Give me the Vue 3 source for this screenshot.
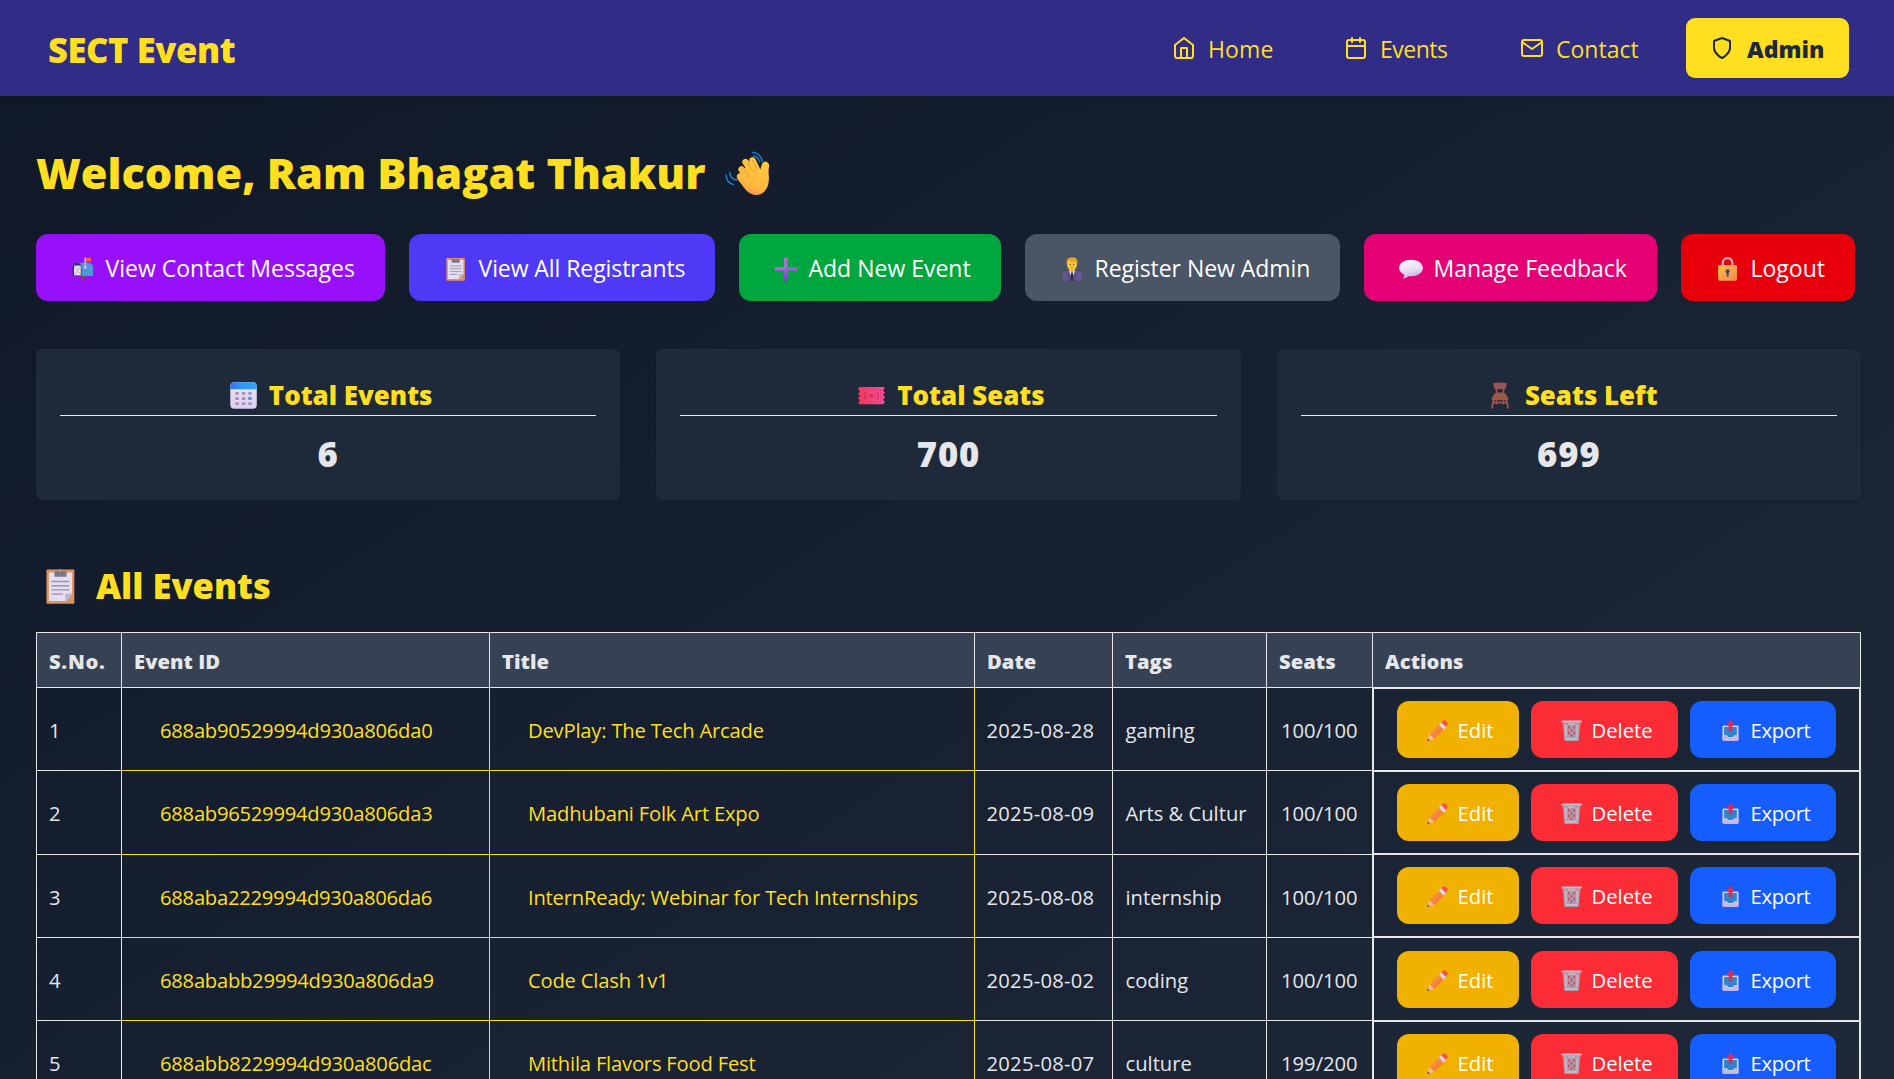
<script setup>
const nav = [
  { id: 'home', label: 'Home' },
  { id: 'events', label: 'Events' },
  { id: 'contact', label: 'Contact' },
]

const actions = [
  { id: 'messages', icon: 'mailbox', label: 'View Contact Messages' },
  { id: 'registrants', icon: 'clipboard', label: 'View All Registrants' },
  { id: 'add', icon: 'plus', label: 'Add New Event' },
  { id: 'admin', icon: 'office', label: 'Register New Admin' },
  { id: 'feedback', icon: 'speech', label: 'Manage Feedback' },
  { id: 'logout', icon: 'lock', label: 'Logout' },
]

const stats = [
  { icon: 'calendar', label: 'Total Events', value: 6 },
  { icon: 'ticket', label: 'Total Seats', value: 700 },
  { icon: 'chair', label: 'Seats Left', value: 699 },
]

const events = [
  { id: '688ab90529994d930a806da0', title: 'DevPlay: The Tech Arcade', date: '2025-08-28', tags: 'gaming', seats: '100/100' },
  { id: '688ab96529994d930a806da3', title: 'Madhubani Folk Art Expo', date: '2025-08-09', tags: 'Arts & Cultur', seats: '100/100' },
  { id: '688aba2229994d930a806da6', title: 'InternReady: Webinar for Tech Internships', date: '2025-08-08', tags: 'internship', seats: '100/100' },
  { id: '688ababb29994d930a806da9', title: 'Code Clash 1v1', date: '2025-08-02', tags: 'coding', seats: '100/100' },
  { id: '688abb8229994d930a806dac', title: 'Mithila Flavors Food Fest', date: '2025-08-07', tags: 'culture', seats: '199/200' },
]
</script>

<template>
  <svg class="sprite" aria-hidden="true">
    <defs>
      <linearGradient id="g-hand" x1="0.7" y1="0" x2="0.3" y2="1">
        <stop offset="0" stop-color="#ffc83d" /><stop offset="0.7" stop-color="#ffb83f" /><stop offset="1" stop-color="#f98a5b" />
      </linearGradient>
      <linearGradient id="g-plus" x1="0" y1="0" x2="0" y2="1">
        <stop offset="0" stop-color="#9a72b8" /><stop offset="0.5" stop-color="#8d68c8" /><stop offset="1" stop-color="#7a3fcc" />
      </linearGradient>
      <linearGradient id="g-bubble" x1="0.3" y1="0" x2="0.6" y2="1">
        <stop offset="0" stop-color="#fbf8ff" /><stop offset="0.6" stop-color="#e6dcf2" /><stop offset="1" stop-color="#bba4dc" />
      </linearGradient>
      <linearGradient id="g-lock" x1="0" y1="0" x2="1" y2="1">
        <stop offset="0" stop-color="#ffc04a" /><stop offset="1" stop-color="#ee8a4c" />
      </linearGradient>
      <linearGradient id="g-cal" x1="0" y1="0" x2="1" y2="0">
        <stop offset="0" stop-color="#3b6fe8" /><stop offset="0.4" stop-color="#2d95f5" /><stop offset="1" stop-color="#35a4ff" />
      </linearGradient>
      <linearGradient id="g-page" x1="0" y1="0" x2="0" y2="1">
        <stop offset="0" stop-color="#ece6f4" /><stop offset="1" stop-color="#dccdf0" />
      </linearGradient>
      <linearGradient id="g-ticket" x1="0" y1="0" x2="1" y2="0">
        <stop offset="0" stop-color="#f8365c" /><stop offset="1" stop-color="#fb4f9c" />
      </linearGradient>
      <linearGradient id="g-pencil" x1="0" y1="0" x2="1" y2="1">
        <stop offset="0" stop-color="#ffa14d" /><stop offset="1" stop-color="#ef6a35" />
      </linearGradient>
      <linearGradient id="g-suit" x1="0" y1="0" x2="1" y2="0">
        <stop offset="0" stop-color="#6a5a94" /><stop offset="0.5" stop-color="#594a80" /><stop offset="1" stop-color="#6c5b9c" />
      </linearGradient>
    </defs>

    <symbol id="wave" viewBox="0 0 45 45">
      <g fill="none" stroke="#1b7fc4" stroke-width="1.5" stroke-linecap="round">
        <path d="M27.5 2.2c5 .3 9 4.2 10 9.200M28.500 6c3 .5 5.300 2.800 6.200 6" />
        <path d="M1.200 25c-.3 4.600 2.800 8.700 7.300 9.600M4.800 22.500c.2 4 3 7 7 7.600" />
      </g>
      <g stroke="url(#g-hand)" stroke-width="6.400" stroke-linecap="round" fill="none">
        <path d="M15 26.500 24 38M16.500 19.500 27 32M20.500 12 31 28M27.500 10.500 36 28" />
      </g>
      <path d="M14.500 23 26 12.500 34.500 22l2-6.500c.6-2.800 3.200-4.600 5.300-3.600 2.200 1 2.700 3 2.200 5.100-.8 3.500-.3 6.500-.1 10.500.2 8-3 14.500-8.500 16.800-5.600 2-11.400-.3-15.400-5.300L12.500 29z" fill="url(#g-hand)" />
      <path d="M17.800 18.500 24.500 26.500M22.500 13 29 22M27.500 10.500 32.800 19.500" stroke="#e8923a" stroke-width="0.900" stroke-linecap="round" fill="none" />
    </symbol>

    <symbol id="mailbox" viewBox="0 0 24 24">
      <rect x="9.800" y="18" width="3.800" height="5.200" fill="#7d4a3c" />
      <path d="M6 5.800h11.500a4.600 4.600 0 0 1 4.600 4.600V19H6z" fill="#4e97dc" />
      <path d="M1.500 19v-8.800A4.400 4.400 0 0 1 6 5.800a4.400 4.400 0 0 1 4.500 4.400V19z" fill="#2b3a62" />
      <path d="M3 8.600h6.800V18.400H3z" fill="#e7e0ef" />
      <path d="m3.500 9 3 4.500 3-4M3.500 18l3-4.500 3 4" stroke="#a79fba" stroke-width="0.700" fill="none" />
      <path d="M13.300.6h1.900v9.600h-1.900z" fill="#b5a9c2" />
      <circle cx="14.200" cy="10.300" r="1.700" fill="#c6b8cf" />
      <path d="M15.200.8H20v3.700h-4.800z" fill="#f9603c" />
    </symbol>

    <symbol id="clipboard" viewBox="0 0 24 24">
      <rect x="2.300" y="1" width="18.600" height="22.800" rx="0.700" fill="#dd935f" />
      <path d="M3.900 3h15.500v13.800l-4.500 5.200h-11z" fill="#e5def0" />
      <path d="M19.400 16.800v1.300l-3.700 3.900h-.8v-4.600z" fill="#bfb2cf" />
      <path d="M5.700 9h11.800M5.700 11.800h11.800M5.700 14.600h11.800M5.700 17.400h7.500" stroke="#9a8fa8" stroke-width="0.900" />
      <path d="M7.600 2.200h2.500a1.600 1.600 0 0 1 3 0h2.600v3.600H7.600z" fill="#7f7683" />
      <circle cx="11.600" cy="1.600" r="0.800" fill="#b7aebb" />
    </symbol>

    <symbol id="plus" viewBox="0 0 24 24">
      <path d="M9.900 1.300q0-1 1-1h2.200q1 0 1 1v8.600h8.600q1 0 1 1v2.200q0 1-1 1h-8.600v8.600q0 1-1 1h-2.200q-1 0-1-1v-8.600H1.300q-1 0-1-1v-2.200q0-1 1-1h8.600z" fill="url(#g-plus)" />
      <path d="M11.200 1.500v9.800H1.500" stroke="#ad8fd4" stroke-width="0.800" fill="none" />
    </symbol>

    <symbol id="office" viewBox="0 0 24 24">
      <path d="M2.500 23.800v-5.300q0-3.200 3.700-4.100L12 13l5.800 1.400q3.700.9 3.700 4.100v5.300z" fill="url(#g-suit)" />
      <path d="M9.200 12h5.600v3L12 21l-2.800-6z" fill="#e4dcef" />
      <path d="m11.200 15.200h1.600l.9 8.600h-3.400z" fill="#33304a" />
      <path d="M9.700 10.500h4.600v3.300L12 15.500l-2.300-1.700z" fill="#f2a634" />
      <ellipse cx="12" cy="7.600" rx="4.900" ry="5.700" fill="#ffc83d" />
      <path d="M6.700 7.500C5.800 3 8 .2 12.200.3c4.300 0 6 3 5.100 7.100l-.9-2.600c-2.600.7-5.600.3-8-.8z" fill="#e8a52a" />
      <circle cx="10.200" cy="7.700" r="0.600" fill="#4a2b2b" /><circle cx="13.800" cy="7.700" r="0.600" fill="#4a2b2b" />
      <path d="M10.400 10.500q1.600 1 3.200 0" stroke="#c05a3a" stroke-width="0.700" fill="none" />
    </symbol>

    <symbol id="speech" viewBox="0 0 24 24">
      <path d="M12 2.700c6.700 0 11.900 3.400 11.900 8.300S18.700 19.300 12 19.300l-2.400-.1q-2 1.900-5 2.200-.8 0-.4-.8.900-1.400.9-3.200C2 15.900.1 13.700.1 11c0-4.900 5.200-8.300 11.900-8.300z" fill="url(#g-bubble)" />
    </symbol>

    <symbol id="lock" viewBox="0 0 24 24">
      <path d="M6.800 9V6a4.800 4.800 0 0 1 9.600 0v3" fill="none" stroke="#b9adb8" stroke-width="2.300" />
      <rect x="2.100" y="7.900" width="19" height="15.800" rx="1.600" fill="url(#g-lock)" />
      <circle cx="11.600" cy="14.200" r="2" fill="#4c4260" />
      <path d="M10.600 14.500h2v5h-2z" fill="#4c4260" />
    </symbol>

    <symbol id="calendar" viewBox="0 0 27 27">
      <rect x="0.300" y="0.300" width="26.500" height="26.500" rx="4" fill="url(#g-page)" />
      <path d="M.3 7.300v-3a4 4 0 0 1 4-4h18.500a4 4 0 0 1 4 4v3z" fill="url(#g-cal)" />
      <path d="M5.400 9.900h3.300v2.900H5.400zM12 9.900h3.300v2.900H12zM18.300 9.900h3.300v2.900h-3.300zM5.400 15h3.300v2.900H5.400zM12 15h3.300v2.900H12zM5.400 20.200h3.300v2.900H5.400zM12 20.200h3.300v2.900H12zM18.300 20.200h3.300v2.900h-3.300z" fill="#a294b5" />
      <path d="M18.300 15h3.300v2.900h-3.300z" fill="#2f96f5" />
    </symbol>

    <symbol id="ticket" viewBox="0 0 27 27">
      <path d="M2 5h23q1.700 0 1.700 1.800-1.600.6-1.600 1.700t1.600 1.600v1.200q-1.600.6-1.600 1.700t1.600 1.600v1.300q-1.600.6-1.600 1.700t1.600 1.700Q26.700 22.200 25 22.200H2Q.3 22.200.3 20.300q1.600-.6 1.600-1.700T.3 16.900v-1.300q1.600-.5 1.600-1.600T.3 12.300v-1.200q1.600-.5 1.600-1.600T.3 7.800V6.800Q.3 5 2 5z" fill="url(#g-ticket)" />
      <rect x="4.300" y="7" width="18.400" height="13.200" rx="0.800" fill="none" stroke="#d43a68" stroke-width="0.600" />
      <rect x="6.500" y="9.700" width="1.300" height="7.800" fill="#c4335f" /><rect x="19.200" y="9.700" width="1.300" height="7.800" fill="#c4335f" />
      <path d="M10.200 8.200v11M16.800 8.200v11" stroke="#d43a68" stroke-width="0.500" />
      <circle cx="13.500" cy="13.600" r="1.700" fill="#b8345a" />
    </symbol>

    <symbol id="chair" viewBox="0 0 27 27">
      <g fill="none" stroke="#9a5254" stroke-width="1.900">
        <path d="M10.600 6.500v6M17.400 6.500v6M10 11.500h8" />
        <path d="M7.400 18 5.900 26.500M20.600 18l1.500 8.500M7 20.500h14" />
        <path d="M10.500 18v4.500M17.500 18v4.500" stroke-width="1.200" />
      </g>
      <path d="M8 .9q6-1 12 0 .8.200.7 1.200l-.6 3.900q-.2.900-1 .9H8.900q-.8 0-1-.9l-.6-3.900Q7.200 1.100 8 .9z" fill="#97545a" />
      <path d="M8.400 11.600h11.200l2.700 4.700q.4 2-1.200 2H6.900q-1.600 0-1.200-2z" fill="#9c5843" />
    </symbol>

    <symbol id="pencil" viewBox="0 0 24 24">
      <path d="M16.200 2.700 19 .5q1-.7 2 .2l2.500 2.600q.8.900 0 1.900l-2.500 3z" fill="#f8504f" />
      <path d="m13.400 5.500 2.800-2.800 5.500 5.500-2.800 2.800z" fill="#ddd3ea" />
      <path d="m2.700 16.200 10.700-10.700 5.500 5.500L8.200 21.600z" fill="url(#g-pencil)" />
      <path d="m2.700 16.200 5.500 5.400-7.800 2.300z" fill="#f3bd9b" />
      <path d="m1.200 21.200 1.900 1.900-2.700.8z" fill="#4b3550" />
    </symbol>

    <symbol id="trash" viewBox="0 0 24 24">
      <path d="M1.800 2.500h20.400L20.200 23q-.1.800-1 .8H4.800q-.9 0-1-.8z" fill="#a99cae" />
      <path d="M5.600 5.500v14M18.400 5.500v14M8 4.500h8" stroke="#d3c8d8" stroke-width="1.300" />
      <path d="m9 6.200 1.200 2.100L9 10.600 7.800 8.300zM15 6.200l1.200 2.100-1.200 2.300-1.200-2.300zM12 9.300l1.200 2.300-1.200 2.300-1.200-2.300zM9 12.500l1.200 2.300L9 17.100l-1.200-2.300zM15 12.500l1.200 2.300-1.200 2.300-1.200-2.300zM12 15.700l1.200 2-1.200 2-1.200-2z" fill="#ec3a4a" />
      <path d="M1 .7h22q.7 0 .7.900t-.7 1.200H1Q.3 2.500.3 1.600T1 .7z" fill="#c9bfcc" />
      <path d="M5 21.500h14" stroke="#d4cbdb" stroke-width="1.400" />
    </symbol>

    <symbol id="outbox" viewBox="0 0 24 24">
      <rect x="2.800" y="6.300" width="18.300" height="17.300" rx="1.300" fill="#d7cfe3" />
      <path d="M4.700 8h14.500v9.300h-3l-1.500 2H9.300l-1.500-2H4.700z" fill="#2e84cf" />
      <path d="M2.800 18.200h4.400l1.600 2.100h6.400l1.600-2.100h4.300v4.100q0 1.300-1.300 1.300H4.100q-1.300 0-1.300-1.300z" fill="#c9b6e2" />
      <path d="M11.300.7q.6-.8 1.300 0l3.800 4.900q.5.900-.5.900h-1.900v5.200q0 .8-.8.800h-2.500q-.8 0-.8-.8V6.500H8q-1 0-.5-.9z" fill="#dc2c58" />
    </symbol>
  </svg>

  <div class="page">
    <header class="topbar">
      <div class="brand">SECT Event</div>
      <nav class="nav">
        <a v-for="n in nav" :key="n.id" class="nav-link" :class="`nav-${n.id}`">
          <svg class="line-icon" viewBox="0 0 24 24">
            <template v-if="n.id === 'home'">
              <path d="m3 9 9-7 9 7v11a2 2 0 0 1-2 2H5a2 2 0 0 1-2-2z" />
              <path d="M9 22V12h6v10" />
            </template>
            <template v-else-if="n.id === 'events'">
              <rect x="3" y="4" width="18" height="18" rx="2" />
              <path d="M16 2v4M8 2v4M3 10h18" />
            </template>
            <template v-else>
              <rect x="2" y="4" width="20" height="16" rx="2" />
              <path d="m22 6-10 7L2 6" />
            </template>
          </svg>
          <span>{{ n.label }}</span>
        </a>
        <a class="admin-btn">
          <svg class="line-icon" viewBox="0 0 24 24"><path d="M12 22s8-4 8-10V5l-8-3-8 3v7c0 6 8 10 8 10z" /></svg>
          <span>Admin</span>
        </a>
      </nav>
    </header>

    <main class="content">
      <h1 class="welcome">
        <span>Welcome, Ram Bhagat Thakur</span>
        <svg class="emoji"><use href="#wave" /></svg>
      </h1>

      <div class="actions">
        <button v-for="a in actions" :key="a.id" class="action" :class="`action-${a.id}`">
          <svg class="emoji"><use :href="`#${a.icon}`" /></svg>
          <span>{{ a.label }}</span>
        </button>
      </div>

      <section class="stats">
        <div v-for="s in stats" :key="s.label" class="stat">
          <h2 class="stat-title">
            <svg class="emoji"><use :href="`#${s.icon}`" /></svg>
            <span>{{ s.label }}</span>
          </h2>
          <p class="stat-value">{{ s.value }}</p>
        </div>
      </section>

      <h2 class="section-title">
        <svg class="emoji"><use href="#clipboard" /></svg>
        <span>All Events</span>
      </h2>

      <div class="table">
        <div class="row head">
          <div class="cell">S.No.</div>
          <div class="cell">Event ID</div>
          <div class="cell">Title</div>
          <div class="cell">Date</div>
          <div class="cell">Tags</div>
          <div class="cell">Seats</div>
          <div class="cell">Actions</div>
        </div>
        <div v-for="(e, i) in events" :key="e.id" class="row">
          <div class="cell">{{ i + 1 }}</div>
          <div class="cell gold event-id">{{ e.id }}</div>
          <div class="cell gold title">{{ e.title }}</div>
          <div class="cell date">{{ e.date }}</div>
          <div class="cell tags">{{ e.tags }}</div>
          <div class="cell seats">{{ e.seats }}</div>
          <div class="tools">
            <button class="tool edit"><svg class="emoji"><use href="#pencil" /></svg><span>Edit</span></button>
            <button class="tool delete"><svg class="emoji"><use href="#trash" /></svg><span>Delete</span></button>
            <button class="tool export"><svg class="emoji"><use href="#outbox" /></svg><span>Export</span></button>
          </div>
        </div>
      </div>
    </main>
  </div>
</template>

<style>
body {
  margin: 0;
  overflow: hidden;
}
</style>

<style scoped>
.sprite {
  position: absolute;
  width: 0;
  height: 0;
}

.page {
  height: 1079px;
  overflow: hidden;
  background: linear-gradient(to bottom right, #101828, #1e2939) 0 0 / 100% 1210px no-repeat;
  color: #e5e7eb;
  font-family: "Open Sans", "Noto Sans", sans-serif;
}

button {
  border: 0;
  padding: 0;
  color: #fff;
  font-family: inherit;
}

.emoji {
  width: 1em;
  height: 1em;
  flex: none;
  overflow: visible;
}

.topbar {
  display: flex;
  align-items: center;
  justify-content: space-between;
  height: 96px;
  padding: 0 45px 0 48px;
  box-sizing: border-box;
  background: #312c85;
  box-shadow: 0 4px 6px -1px rgba(0, 0, 0, 0.1);
  color: #ffdf20;
}

.brand {
  padding-top: 3px;
  font-size: 34.6px;
  font-weight: 800;
  letter-spacing: -0.42px;
}

.nav,
.nav-link,
.admin-btn {
  display: flex;
  align-items: center;
}

.nav-link,
.admin-btn {
  font-size: 23px;
}

.nav-link span,
.admin-btn span {
  padding-top: 2px;
}

.nav-link {
  gap: 12px;
}

.nav-home {
  width: 172px;
  letter-spacing: 0.1px;
}

.nav-events {
  width: 176px;
  letter-spacing: -0.5px;
}

.nav-contact {
  width: 166px;
}

.line-icon {
  width: 24px;
  height: 24px;
  flex: none;
  fill: none;
  stroke: currentColor;
  stroke-width: 2;
  stroke-linecap: round;
  stroke-linejoin: round;
}

.admin-btn {
  gap: 13px;
  width: 163px;
  height: 60px;
  padding-left: 24px;
  box-sizing: border-box;
  border-radius: 9px;
  background: #ffdf20;
  color: #1e2939;
  font-weight: 800;
}

.content {
  width: 1825px;
  padding-left: 36px;
}

.welcome {
  display: flex;
  align-items: center;
  gap: 20px;
  height: 62px;
  margin: 50px 0 26px;
  color: #ffdf20;
  font-size: 43.2px;
  font-weight: 800;
  line-height: 62px;
}

.welcome .emoji {
  width: 45px;
  height: 45px;
  margin-bottom: 9px;
}

.welcome span {
  padding-bottom: 8px;
}

.actions {
  display: flex;
  gap: 24px;
}

.action {
  display: flex;
  align-items: center;
  gap: 11px;
  height: 67px;
  padding-left: 34.5px;
  border-radius: 12px;
  font-size: 23px;
}

.action .emoji,
.tool .emoji {
  width: 1.043em;
  height: 1.043em;
}

.action .emoji {
  margin-top: 2px;
}

.action-messages {
  width: 349px;
  background: #9810fa;
}

.action-registrants {
  width: 306px;
  background: #4f39f6;
  letter-spacing: -0.07px;
}

.action-add {
  width: 262px;
  background: #00a63e;
}

.action-admin {
  width: 315px;
  background: #4a5565;
  letter-spacing: -0.05px;
}

.action-feedback {
  width: 293px;
  background: #e60076;
}

.action-logout {
  width: 174px;
  background: #e7000b;
}

.stats {
  display: grid;
  grid-template-columns: repeat(3, 1fr);
  gap: 36px;
  margin-top: 48px;
}

.stat {
  height: 151px;
  padding: 24px;
  box-sizing: border-box;
  border-radius: 6px;
  background: #1e2939;
  box-shadow: 0 1px 3px rgba(0, 0, 0, 0.1);
}

.stat-title {
  display: flex;
  align-items: center;
  justify-content: center;
  gap: 12px;
  height: 43px;
  margin: 0;
  padding-left: 6px;
  box-sizing: border-box;
  border-bottom: 1px solid #e5e7eb;
  color: #ffdf20;
  font-size: 25.9px;
  font-weight: 800;
  line-height: 42px;
}

.stat-title .emoji {
  width: 27px;
  height: 27px;
  margin-top: 2px;
}

.stat-title span {
  padding-top: 1px;
}

.stat-value {
  margin: 11px 0 0;
  font-size: 34.6px;
  font-weight: 800;
  line-height: 53px;
  letter-spacing: 0.9px;
  text-align: center;
}

.section-title {
  display: flex;
  align-items: center;
  gap: 17px;
  height: 54px;
  margin: 61px 0 18px 7px;
  color: #ffdf20;
  font-size: 34.6px;
  font-weight: 800;
  line-height: 54px;
}

.section-title .emoji {
  width: 36px;
  height: 36px;
  margin-bottom: 4px;
}

.section-title span {
  padding-bottom: 4px;
}

.table {
  width: 1825px;
  margin-top: -1px;
  box-sizing: border-box;
  border: 1px solid #e5e7eb;
  border-bottom: 0;
}

.row {
  display: grid;
  grid-template-columns: 85px 368px 485px 138px 154px 106px 1fr;
  height: 83.3px;
}

.cell {
  display: flex;
  align-items: center;
  padding: 2px 0 0 12px;
  border-right: 1px solid #e5e7eb;
  border-bottom: 1px solid #e5e7eb;
  font-size: 20.2px;
  white-space: nowrap;
}

.head {
  height: 55px;
  background: #364153;
}

.head .cell {
  padding-top: 1px;
  font-weight: 800;
  letter-spacing: 0.05px;
}

.head .cell:first-child {
  letter-spacing: 0.7px;
}

.head .cell:last-child {
  border-right: 0;
}

.gold {
  padding-left: 38px;
  border-color: #ffdf20;
  color: #ffdf20;
}

.event-id {
  letter-spacing: -0.25px;
}

.title {
  letter-spacing: -0.2px;
}

.date {
  padding-left: 11.5px;
  letter-spacing: 0.25px;
}

.tags {
  padding-left: 12.5px;
}

.seats {
  padding-left: 14px;
}

.tools {
  display: flex;
  align-items: center;
  gap: 12px;
  margin: -1.45px -1px -0.55px -1px;
  padding-left: 23px;
  border: 2px solid #e5e7eb;
  z-index: 1;
}

.tool {
  display: flex;
  align-items: center;
  gap: 10px;
  height: 57px;
  padding-left: 29.5px;
  border-radius: 12px;
  font-size: 20.2px;
}

.tool .emoji {
  margin-top: 2px;
}

.tool span {
  padding-top: 1px;
}

.edit {
  width: 122px;
  background: #f0b100;
}

.delete {
  width: 147px;
  background: #fb2c36;
}

.export {
  width: 146px;
  background: #155dfc;
  letter-spacing: -0.3px;
}
</style>
